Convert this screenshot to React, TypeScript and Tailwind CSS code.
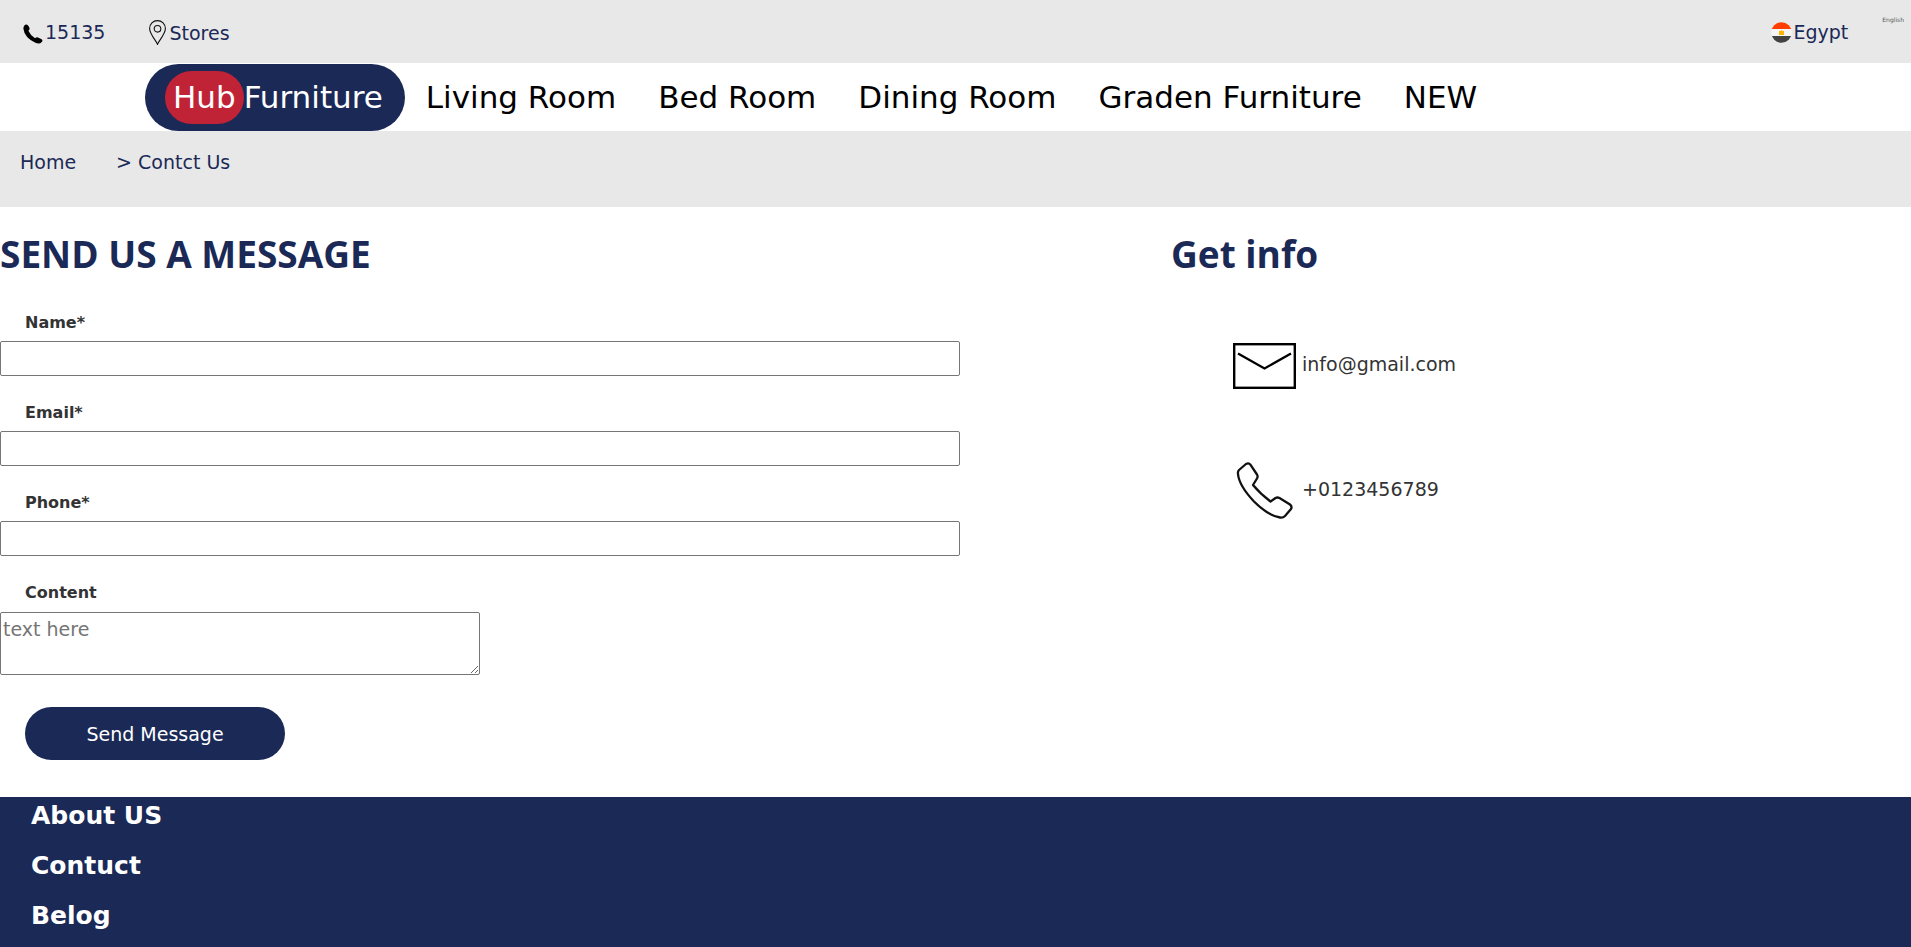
const navItems = ["Living Room", "Bed Room", "Dining Room", "Graden Furniture", "NEW"];
const fields = [
  { id: "name", label: "Name*", type: "text" },
  { id: "email", label: "Email*", type: "email" },
  { id: "phone", label: "Phone*", type: "tel" },
];
const footerLinks = ["About US", "Contuct", "Belog"];

function HandsetSolid() {
  return (
    <svg className="h-5 w-5" viewBox="0 0 20 20" aria-hidden="true">
      <path
        d="M1.2 1.8 Q2.6 0 4.6 0.9 Q6.4 2.6 6.6 4.6 Q6.6 5.8 5.4 6.8 Q7 10.8 12 14.2 Q13.4 12.9 15 13.4 L18.6 15.2 Q20.2 16.4 18.8 18 Q16.4 20.6 12.4 18.8 Q1.4 13.6 0.4 4.8 Q0.4 2.8 1.2 1.8 Z"
        fill="#000"
      />
    </svg>
  );
}

function MapPin() {
  return (
    <svg className="h-[25px] w-[17px]" viewBox="0 0 17 25" fill="none" stroke="#111" strokeWidth="1.1" aria-hidden="true">
      <path d="M8.5 24.3 C7.5 21.3 0.6 14 0.6 8.5 A7.9 7.9 0 0 1 16.4 8.5 C16.4 14 9.5 21.3 8.5 24.3 Z" />
      <circle cx="8.5" cy="8.8" r="3.3" />
    </svg>
  );
}

function EgyptFlag() {
  return (
    <svg className="h-[21px] w-[21px]" viewBox="0 0 21 21" aria-hidden="true">
      <clipPath id="flag-round">
        <circle cx="10.5" cy="10.5" r="10.3" />
      </clipPath>
      <g clipPath="url(#flag-round)">
        <rect width="21" height="21" fill="#f5f5f5" />
        <rect width="21" height="7" fill="#ff3d00" />
        <rect y="14" width="21" height="7" fill="#424242" />
        <path d="M8 9 L9.5 9 L10.5 8 L11.5 9 L13 9 V13 H8 Z" fill="#ffb300" />
      </g>
    </svg>
  );
}

function Envelope() {
  return (
    <svg className="h-[46px] w-[63px]" viewBox="0 0 63 46" fill="none" stroke="#000" aria-hidden="true">
      <rect x="1.2" y="1.2" width="60.6" height="43.6" strokeWidth="2.4" />
      <path d="M5 10.5 L31.5 25.5 L58 10.5" strokeWidth="2.3" />
    </svg>
  );
}

function HandsetOutline() {
  return (
    <svg className="h-[57px] w-[63px]" viewBox="0 0 63 57" fill="none" stroke="#111" strokeWidth="2.3" strokeLinejoin="round" aria-hidden="true">
      <path d="M13 2 Q15.8 0.6 17.4 2.6 L24 12.5 Q25.2 14.5 24 16.5 L20 23 Q27 31.5 37.5 39.5 L42.5 36 Q44.5 35 46.5 36 L57 42.5 Q59.4 44.5 58 47 L52 54 Q50 56 47 55.5 Q35 53.5 21 39.5 Q6 23.5 5 12 Q4.6 9.5 6 8 Z" />
    </svg>
  );
}

export default function App() {
  return (
    <div className="bg-white font-['DejaVu_Sans',sans-serif] text-[19px] leading-[24px] text-[#333]">
      <header>
        <div className="flex h-[63px] items-start bg-[#e8e8e8] text-[#1b2957]">
          <a href="#call" className="ml-[23px] mt-5 flex items-center gap-[2px]">
            <span className="pt-1">
              <HandsetSolid />
            </span>
            15135
          </a>
          <a href="#stores" className="ml-[44px] mt-5 flex items-center gap-[3px]">
            <MapPin />
            Stores
          </a>
          <a href="#country" className="ml-auto mt-5 flex items-center gap-[2px]">
            <EgyptFlag />
            Egypt
          </a>
          <a href="#language" className="ml-[34px] mr-[7px] mt-2 text-[6px] text-[#555]">
            English
          </a>
        </div>
        <nav className="flex items-center pl-[145px] pt-px text-[31px] leading-[37px] text-black">
          <a href="#home" className="flex h-[67px] items-center rounded-full bg-[#1b2957] pl-5 pr-[22px] text-white">
            <span className="rounded-full bg-[#c02336] px-2 py-2">Hub</span>
            Furniture
          </a>
          {navItems.map((item) => (
            <a key={item} href="#catalog" className="px-[21px]">
              {item}
            </a>
          ))}
        </nav>
        <div className="flex h-[76px] gap-10 bg-[#e8e8e8] px-5 pt-[19px] text-[#1b2957]">
          <a href="#home">Home</a>
          <span>&gt; Contct Us</span>
        </div>
      </header>

      <main className="flex pb-[37px] pt-[22px]">
        <form className="w-[1171px] shrink-0">
          <h1 className="font-['Open_Sans',sans-serif] text-[37px] font-bold leading-[50px] text-[#1b2957]">SEND US A MESSAGE</h1>
          <div className="flex flex-col gap-[25px] pt-[32px]">
            {fields.map((field) => (
              <div key={field.id} className="flex flex-col gap-[6px]">
                <label htmlFor={field.id} className="pl-[25px] text-[16px] font-bold leading-[24px]">
                  {field.label}
                </label>
                <input id={field.id} type={field.type} className="h-[35px] w-[960px] rounded-xs border border-[#767676] px-[2px]" />
              </div>
            ))}
            <div className="flex flex-col gap-[7px]">
              <label htmlFor="content" className="pl-[25px] text-[16px] font-bold leading-[24px]">
                Content
              </label>
              <textarea
                id="content"
                placeholder="text here"
                className="h-[63px] w-[480px] resize rounded-xs border border-[#767676] p-[2px] leading-[28px] placeholder:text-[#757575]"
              />
            </div>
          </div>
          <button type="submit" className="ml-[25px] mt-8 h-[53px] w-[260px] rounded-full bg-[#1b2957] text-white">
            Send Message
          </button>
        </form>
        <section>
          <h2 className="font-['Open_Sans',sans-serif] text-[37px] font-bold leading-[50px] text-[#1b2957]">Get info</h2>
          <div className="flex flex-col gap-[73px] pl-[62px] pt-[64px]">
            <a href="mailto:info@gmail.com" className="flex items-center gap-[6px]">
              <Envelope />
              <span className="pb-1">info@gmail.com</span>
            </a>
            <a href="tel:+0123456789" className="flex items-center gap-[6px]">
              <HandsetOutline />
              <span className="pb-1">+0123456789</span>
            </a>
          </div>
        </section>
      </main>

      <footer className="flex h-[150px] flex-col gap-[20px] overflow-hidden bg-[#1b2957] pl-[31px] pt-1 text-[25px] font-bold leading-[30px] text-white">
        {footerLinks.map((link) => (
          <a key={link} href="#info">
            {link}
          </a>
        ))}
      </footer>
    </div>
  );
}
